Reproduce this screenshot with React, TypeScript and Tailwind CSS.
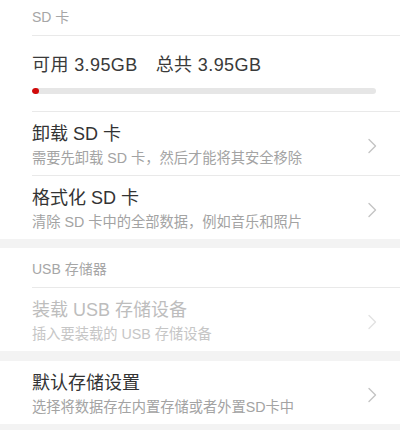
import type { ReactNode } from 'react'

const FONT = "font-['Liberation_Sans','Noto_Sans_CJK_SC',sans-serif]"

function Chevron({ disabled }: { disabled?: boolean }) {
  return (
    <svg width="10" height="16" viewBox="0 0 10 16" fill="none" className="shrink-0">
      <polyline
        points="2,1.5 8.5,8 2,14.5"
        stroke={disabled ? '#e2e2e2' : '#c4c4c4'}
        strokeWidth="1.4"
        strokeLinecap="round"
        strokeLinejoin="round"
      />
    </svg>
  )
}

function Row({ title, desc, disabled, last }: { title: string; desc: string; disabled?: boolean; last?: boolean }) {
  return (
    <div className={`flex items-center pr-[23px] pt-[11px] pb-[7px] ${last ? '' : 'border-b border-[#e9e9e9]'}`}>
      <div className="flex-1 min-w-0">
        <p className={`text-[18px] leading-[22px] ${disabled ? 'text-[#bdbdbd]' : 'text-[#333333]'}`}>{title}</p>
        <p className={`mt-[3px] text-[14.25px] leading-[20px] ${disabled ? 'text-[#c6c6c6]' : 'text-[#a3a3a3]'}`}>{desc}</p>
      </div>
      <Chevron disabled={disabled} />
    </div>
  )
}

function Section({ children }: { children: ReactNode }) {
  return <div className="bg-white pl-8">{children}</div>
}

export default function App() {
  const used = 2 // percent of bar shown red

  return (
    <div className={`w-[400px] h-[430px] overflow-hidden bg-[#f3f3f3] ${FONT}`}>
      <Section>
        <div className="h-[36px] flex items-center border-b border-[#e9e9e9]">
          <span className="text-[14px] text-[#a6a6a6]">SD 卡</span>
        </div>

        <div className="pt-[18px] pb-[17px] pr-[24px] border-b border-[#e9e9e9]">
          <p className="text-[18px] leading-[22px] tracking-[0.4px] text-[#3a3a3a]">
            可用 3.95GB<span className="inline-block w-[18px]" />总共 3.95GB
          </p>
          <div className="mt-[12px] h-[6px] rounded-full bg-[#e6e6e6] overflow-hidden">
            <div className="h-full rounded-full bg-[#d10a0a]" style={{ width: `${used}%` }} />
          </div>
        </div>

        <Row title="卸载 SD 卡" desc="需要先卸载 SD 卡，然后才能将其安全移除" />
        <Row title="格式化 SD 卡" desc="清除 SD 卡中的全部数据，例如音乐和照片" last />
      </Section>

      <div className="h-[9px]" />

      <Section>
        <div className="h-[40px] flex items-center pt-[3px] border-b border-[#e9e9e9]">
          <span className="text-[14px] text-[#a6a6a6]">USB 存储器</span>
        </div>
        <Row title="装载 USB 存储设备" desc="插入要装载的 USB 存储设备" disabled last />
      </Section>

      <div className="h-[10px]" />

      <Section>
        <Row title="默认存储设置" desc="选择将数据存在内置存储或者外置SD卡中" last />
      </Section>
    </div>
  )
}
